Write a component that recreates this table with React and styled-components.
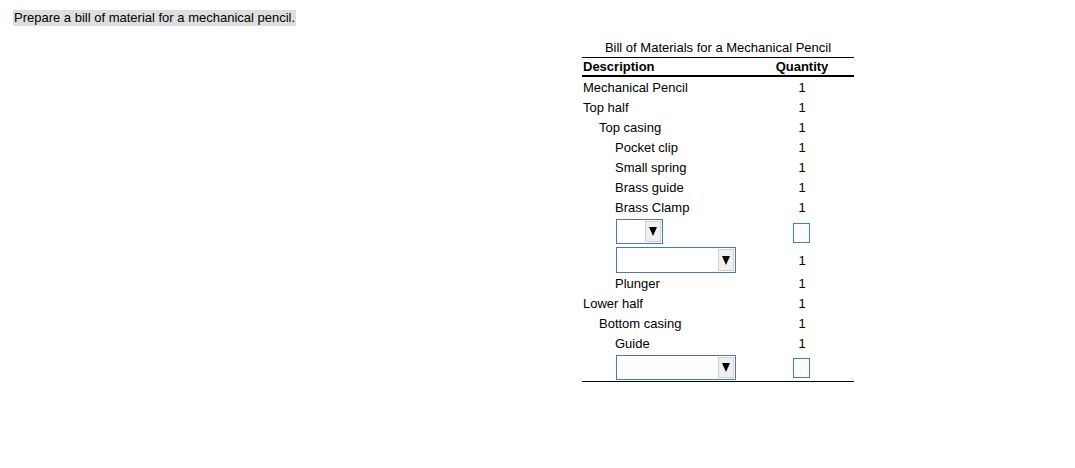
import React from "react"
import styled, { createGlobalStyle } from "styled-components"

const GlobalStyle = createGlobalStyle`
  body {
    margin: 0;
    background: #fff;
    font-family: "Liberation Sans", Arial, sans-serif;
    font-size: 13px;
    color: #000;
  }
`

const Page = styled.div`
  padding: 10px 13px 0;
`

const Prompt = styled.span`
  display: inline-block;
  background: #dedede;
  line-height: 16px;
  padding: 0 1px;
`

const Bom = styled.div`
  width: 272px;
  margin: 13px 0 0 569px;
`

const Caption = styled.div`
  height: 18px;
  line-height: 18px;
  text-align: center;
`

const Row = styled.div`
  display: flex;
  align-items: center;
  height: 20px;
`

const HeaderRow = styled(Row)`
  height: 17px;
  border-top: 1px solid #000;
  border-bottom: 2px solid #000;
  font-weight: bold;
`

const SelectRow = styled.div`
  display: flex;
  align-items: flex-start;
  box-sizing: border-box;
  height: ${props => props.h}px;
  padding-top: ${props => props.pad}px;
`

const DescCell = styled.div`
  flex: 1;
  padding-left: ${props => 1 + (props.level || 0) * 16}px;
  white-space: nowrap;
`

const QtyCell = styled.div`
  width: 104px;
  align-self: stretch;
  display: flex;
  align-items: center;
  justify-content: center;
`

const SelectBox = styled.div`
  margin-left: 33px;
  width: ${props => props.w}px;
  height: ${props => props.boxH}px;
  box-sizing: border-box;
  border: 1px solid #4a74cc;
  background: #fff;
  display: flex;
  justify-content: flex-end;
  padding: 1px;
`

const ArrowButton = styled.div`
  width: 16px;
  box-sizing: border-box;
  background: #f0f0f0;
  border: 1px solid #d0d0d0;
  display: flex;
  align-items: center;
  justify-content: center;
  &::after {
    content: "";
    border-left: 4.5px solid transparent;
    border-right: 4.5px solid transparent;
    border-top: 9px solid #000;
  }
`

const QtyInput = styled.div`
  width: 17px;
  height: 20px;
  box-sizing: border-box;
  border: 1px solid #3b87a8;
  background: #fff;
  margin-left: -1px;
`

const Footer = styled.div`
  border-bottom: 1px solid #000;
`

const rows = [
  ["Mechanical Pencil", 0],
  ["Top half", 0],
  ["Top casing", 1],
  ["Pocket clip", 2],
  ["Small spring", 2],
  ["Brass guide", 2],
  ["Brass Clamp", 2],
  { select: 47, h: 29, boxH: 25, pad: 2, qty: null },
  { select: 120, h: 27, boxH: 26, pad: 1, qty: "1" },
  ["Plunger", 2],
  ["Lower half", 0],
  ["Bottom casing", 1],
  ["Guide", 2],
  { select: 120, h: 28, boxH: 25, pad: 2, qty: null },
]

export default function App() {
  return (
    <Page>
      <GlobalStyle />
      <Prompt>Prepare a bill of material for a mechanical pencil.</Prompt>
      <Bom>
        <Caption>Bill of Materials for a Mechanical Pencil</Caption>
        <HeaderRow>
          <DescCell>Description</DescCell>
          <QtyCell>Quantity</QtyCell>
        </HeaderRow>
        {rows.map((r, i) =>
          Array.isArray(r) ? (
            <Row key={i}>
              <DescCell level={r[1]}>{r[0]}</DescCell>
              <QtyCell>1</QtyCell>
            </Row>
          ) : (
            <SelectRow key={i} h={r.h} pad={r.pad}>
              <DescCell>
                <SelectBox w={r.select} boxH={r.boxH}>
                  <ArrowButton />
                </SelectBox>
              </DescCell>
              <QtyCell>{r.qty ? r.qty : <QtyInput />}</QtyCell>
            </SelectRow>
          )
        )}
        <Footer />
      </Bom>
    </Page>
  )
}
